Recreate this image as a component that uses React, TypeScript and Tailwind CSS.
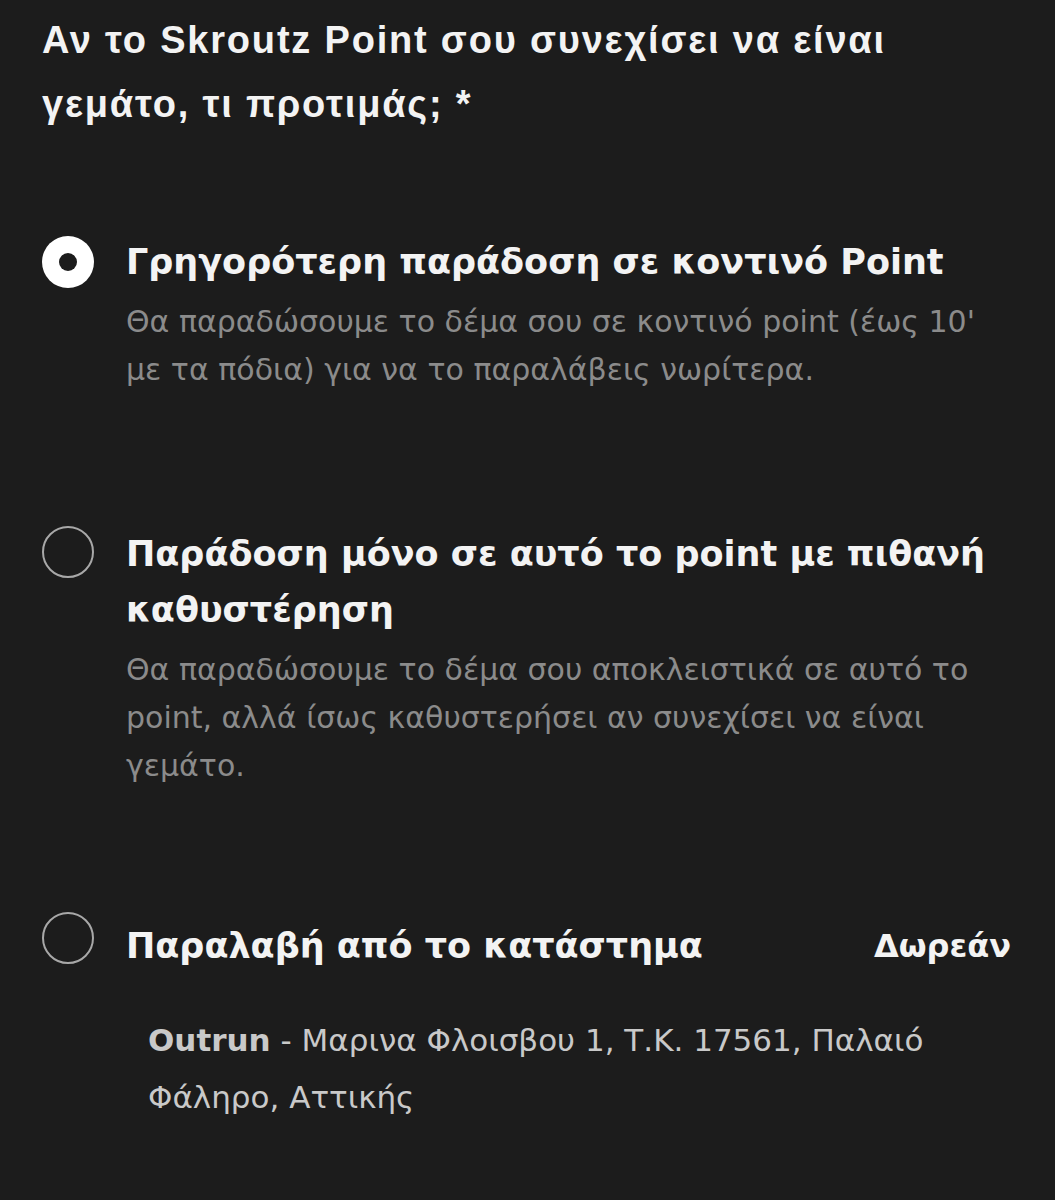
import React from "react";

type Option = {
  id: string;
  title: string;
  desc?: string;
  price?: string;
  address?: { name: string; rest: string };
};

const options: Option[] = [
  {
    id: "nearby",
    title: "Γρηγορότερη παράδοση σε κοντινό Point",
    desc: "Θα παραδώσουμε το δέμα σου σε κοντινό point (έως 10' με τα πόδια) για να το παραλάβεις νωρίτερα.",
  },
  {
    id: "same",
    title: "Παράδοση μόνο σε αυτό το point με πιθανή καθυστέρηση",
    desc: "Θα παραδώσουμε το δέμα σου αποκλειστικά σε αυτό το point, αλλά ίσως καθυστερήσει αν συνεχίσει να είναι γεμάτο.",
  },
  {
    id: "store",
    title: "Παραλαβή από το κατάστημα",
    price: "Δωρεάν",
    address: { name: "Outrun", rest: " - Μαρινα Φλοισβου 1, Τ.Κ. 17561, Παλαιό Φάληρο, Αττικής" },
  },
];

function Radio({ checked }: { checked: boolean }) {
  if (checked) {
    return (
      <span className="flex h-[52px] w-[52px] shrink-0 items-center justify-center rounded-full bg-white">
        <span className="h-[18px] w-[18px] rounded-full bg-[#1c1c1c]" />
      </span>
    );
  }
  return <span className="block h-[52px] w-[52px] shrink-0 rounded-full border-[2px] border-[#a8a8a8]" />;
}

export default function App() {
  const selected = "nearby";

  return (
    <div className="min-h-[1200px] w-[1055px] bg-[#1c1c1c] pl-[42px] pr-[44px] pt-[8px] font-['DejaVu_Sans',sans-serif] text-[#f3f3f3]">
      <h1 className="w-[890px] font-['Liberation_Sans',sans-serif] text-[38px] font-bold leading-[64px] tracking-[1.8px]">
        Αν το Skroutz Point σου συνεχίσει να είναι γεμάτο, τι προτιμάς; *
      </h1>

      <div className="mt-[98px] flex flex-col">
        {options.map((o, i) => (
          <div key={o.id} className={i === 0 ? "" : i === 1 ? "mt-[132px]" : "mt-[122px]"}>
            <div className="flex items-start gap-[32px]">
              <div className={i === 0 ? "pt-[2px]" : "pt-0"}>
                <Radio checked={o.id === selected} />
              </div>
              <div className="flex-1">
                <div className={"flex items-start justify-between gap-4 " + (o.price ? "pt-[6px]" : "")}>
                  <div className="text-[35px] font-bold leading-[56px]">{o.title}</div>
                  {o.price && <div className="text-[32px] font-bold leading-[56px]">{o.price}</div>}
                </div>
                {o.desc && (
                  <p className="mt-[8px] text-[30px] leading-[48px] text-[#8b8b8b]">{o.desc}</p>
                )}
              </div>
            </div>
            {o.address && (
              <p className="mt-[38px] pl-[106px] pr-[40px] text-[31px] leading-[57px] text-[#c9c9c9]">
                <span className="font-bold">{o.address.name}</span>
                {o.address.rest}
              </p>
            )}
          </div>
        ))}
      </div>
    </div>
  );
}
